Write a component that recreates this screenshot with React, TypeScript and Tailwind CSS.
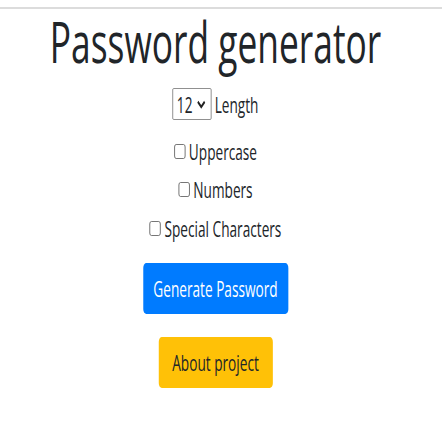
import React from 'react'

// The reference is a squeezed page: everything is drawn at full width, then
// compressed horizontally with one scale on the wrapper.
const font = { fontFamily: '"Open Sans", "Noto Sans", sans-serif' }

function Check({ label }: { label: string }) {
    return (
        <label className="flex items-center h-[30px] text-[22px] text-[#212529] gap-[6px]">
            <span className="w-[18px] h-[15px] rounded-[3px] border border-[#555] bg-white" />
            <span>{label}</span>
        </label>
    )
}

export default function App() {
    return (
        <div className="w-[442px] h-[436px] bg-white overflow-hidden" style={font}>
            <div className="mt-[7px] h-[2px] bg-[#dcdcdc]" />
            <div className="flex justify-center pr-[12px]">
                <div className="w-[713px] shrink-0 flex flex-col items-center scale-x-[0.62]">
                    <h1 className="text-[57px] leading-[65px] text-[#212529] font-medium">Password generator</h1>

                    <div className="mt-[14px] flex items-center h-[32px] gap-[5px] text-[22px] text-[#212529]">
                        <div className="h-[32px] w-[63px] border border-[#767676] rounded-[2px] flex items-center pl-[6px] gap-[7px]">
                            <span>12</span>
                            <svg width="15" height="9" viewBox="0 0 15 9">
                                <path d="M2 1.8 L7.5 7 L13 1.8" fill="none" stroke="#222" strokeWidth="2.6" />
                            </svg>
                        </div>
                        <span>Length</span>
                    </div>

                    <div className="mt-[16px]"><Check label="Uppercase" /></div>
                    <div className="mt-[8px]"><Check label="Numbers" /></div>
                    <div className="mt-[9px]"><Check label="Special Characters" /></div>

                    <button className="mt-[20px] h-[51px] w-[234px] rounded-[5px] bg-[#007bff] text-white text-[22px]">
                        Generate Password
                    </button>
                    <button className="mt-[23px] h-[51px] w-[184px] rounded-[5px] bg-[#ffc107] text-[#212529] text-[22px]">
                        About project
                    </button>
                </div>
            </div>
        </div>
    )
}
